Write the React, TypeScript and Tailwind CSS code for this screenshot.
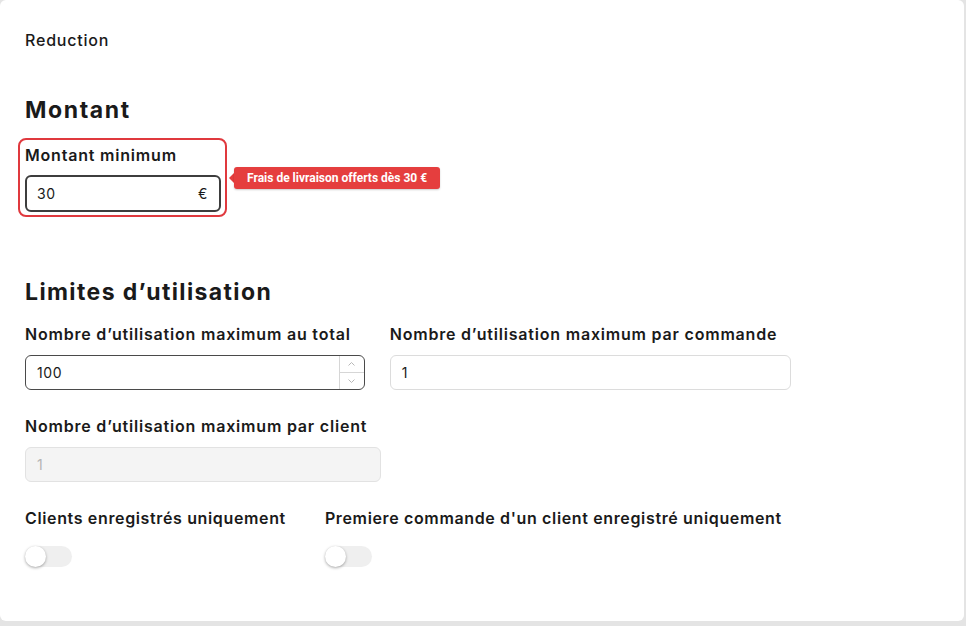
const font = { fontFamily: 'Inter, "Noto Sans", sans-serif' };

function Field({ label, children }: { label: string; children: React.ReactNode }) {
  return (
    <div className="flex flex-col">
      <label className="text-[16px] leading-5 font-semibold tracking-[0.05em] text-[#1a1a1a] pr-[14px] whitespace-nowrap">{label}</label>
      <div className="mt-[11px]">{children}</div>
    </div>
  );
}

function Toggle() {
  return (
    <div className="w-[47px] h-[21px] rounded-full bg-[#efefef] flex items-center">
      <div className="w-[21px] h-[21px] rounded-full bg-white shadow-[0_1px_3px_rgba(0,0,0,0.35)]" />
    </div>
  );
}

function Spinner() {
  return (
    <div className="flex flex-col w-[25px] border-l border-[#d6d6d6] h-full">
      <div className="flex-1 flex items-center justify-center border-b border-[#d6d6d6]">
        <svg width="7" height="4" viewBox="0 0 7 4" fill="none" stroke="#b0b0b0" strokeWidth="0.9">
          <path d="M0.5 3.5 L3.5 0.5 L6.5 3.5" />
        </svg>
      </div>
      <div className="flex-1 flex items-center justify-center">
        <svg width="7" height="4" viewBox="0 0 7 4" fill="none" stroke="#b0b0b0" strokeWidth="0.9">
          <path d="M0.5 0.5 L3.5 3.5 L6.5 0.5" />
        </svg>
      </div>
    </div>
  );
}

export default function App() {
  return (
    <div className="min-h-screen bg-[#e4e4e4]" style={font}>
      <div className="w-[964px] h-[621px] bg-white rounded-md pl-[25px] pt-[30px] text-[#1a1a1a]">
        <p className="text-[16px] leading-5 font-medium tracking-[0.05em]">Reduction</p>

        <h2 className="mt-[46px] text-[23px] leading-7 font-bold tracking-[0.07em]">Montant</h2>

        <div className="mt-[14px] flex items-center -ml-[7px]">
          <div className="border-2 border-[#e0393e] rounded-lg pl-[5px] pr-[4px] pt-[5px] pb-[3px]">
            <label className="block text-[16px] leading-5 font-semibold tracking-[0.05em]">Montant minimum</label>
            <div className="mt-[10px] w-[196px] h-[37px] border-2 border-[#3d3d3d] rounded-md flex items-center justify-between pl-[10px] pr-[11px] text-[14px] tracking-[0.04em]">
              <span>30</span>
              <span>€</span>
            </div>
          </div>
          <div className="flex items-center ml-[2px]">
            <div className="w-0 h-0 border-y-[5px] border-y-transparent border-r-[5px] border-r-[#e53e3e]" />
            <div
              className="bg-[#e53e3e] text-white text-[12px] font-bold h-[22px] px-[13px] flex items-center rounded-[3px] shadow-[0_1px_2px_rgba(0,0,0,0.2)]"
              style={{ fontFamily: 'Roboto, "Liberation Sans", sans-serif' }}
            >
              Frais de livraison offerts dès 30 €
            </div>
          </div>
        </div>

        <h2 className="mt-[61px] text-[23px] leading-7 font-bold tracking-[0.06em]">Limites d’utilisation</h2>

        <div className="mt-[18px] flex flex-wrap gap-x-[25px]">
          <Field label="Nombre d’utilisation maximum au total">
            <div className="h-[35px] border border-[#4a4a4a] rounded-md flex items-center justify-between pl-[11px] text-[14px] tracking-[0.04em] overflow-hidden">
              <span>100</span>
              <Spinner />
            </div>
          </Field>
          <Field label="Nombre d’utilisation maximum par commande">
            <div className="h-[35px] border border-[#dcdcdc] rounded-md flex items-center pl-[11px] text-[14px]">
              <span>1</span>
            </div>
          </Field>
        </div>

        <div className="mt-[26px] flex">
          <Field label="Nombre d’utilisation maximum par client">
            <div className="h-[35px] border border-[#e2e2e2] bg-[#f4f4f4] rounded-md flex items-center pl-[11px] text-[14px] text-[#b5b5b5]">
              <span>1</span>
            </div>
          </Field>
        </div>

        <div className="mt-[26px] flex gap-x-[25px]">
          <div className="flex flex-col">
            <label className="text-[16px] leading-5 font-semibold tracking-[0.04em] pr-[14px] whitespace-nowrap">Clients enregistrés uniquement</label>
            <div className="mt-[18px]">
              <Toggle />
            </div>
          </div>
          <div className="flex flex-col">
            <label className="text-[16px] leading-5 font-semibold tracking-[0.04em] pr-[14px] whitespace-nowrap">Premiere commande d'un client enregistré uniquement</label>
            <div className="mt-[18px]">
              <Toggle />
            </div>
          </div>
        </div>
      </div>
    </div>
  );
}
